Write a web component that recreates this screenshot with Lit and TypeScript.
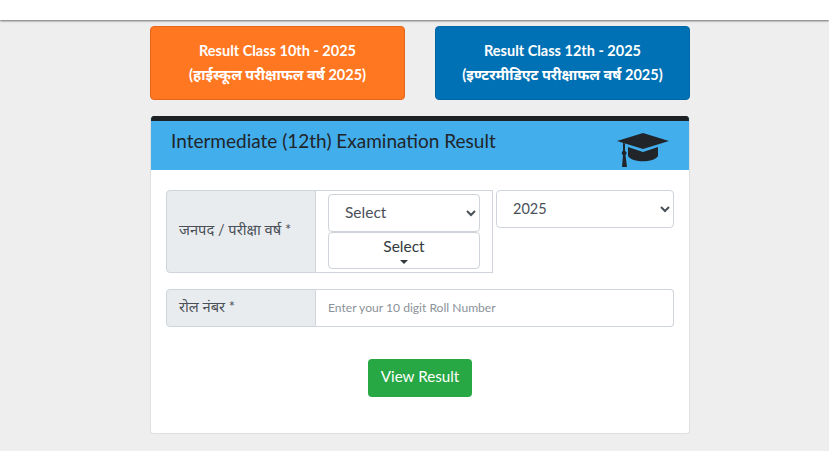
import { LitElement, html, css } from "lit";
import { customElement } from "lit/decorators.js";

@customElement("app-root")
export class AppRoot extends LitElement {
  static styles = css`
    :host { display: block; height: 451px; background: #eeeeee; overflow: hidden;
      font-family: Lato, "Noto Sans Devanagari", "Noto Sans", sans-serif; color: #343a40; }
    * { box-sizing: border-box; }
    .top { height: 20px; background: #fff; box-shadow: 0 1px 2px rgba(0,0,0,.55); }
    .wrap { width: 540px; margin-left: 150px; padding-top: 6px; }
    .links { display: flex; justify-content: space-between; }
    .link { width: 255px; height: 74px; border-radius: 4px; color: #fff; font-weight: 700; font-size: 14.5px;
      line-height: 24px; padding-bottom: 1px; display: flex; flex-direction: column; align-items: center; justify-content: center; text-decoration: none; }
    .orange { background: #ff7721; border: 1px solid #e8661a; }
    .blue { background: #0071b4; border: 1px solid #0068a6; }
    .card { margin-top: 16px; height: 318px; background: #fff; border: 1px solid #dfdfdf; border-top: 0; border-radius: 4px; overflow: hidden; }
    .head { height: 54px; background: #43aeec; border-top: 5px solid #1d2124; margin: 0 -1px 0 0; padding: 7px 20px 0;
      display: flex; justify-content: space-between; }
    .head h2 { margin: 0; font-size: 19px; line-height: 26px; font-weight: 400; color: #212529; }
    .head svg { width: 52px; height: 35px; margin: 4px 1px 0 0; }
    .body { padding: 20px 15px 0; }
    .row1 { display: flex; align-items: flex-start; gap: 3px; }
    .group { display: flex; }
    .label { width: 150px; background: #e9ecef; border: 1px solid #ced4da; border-radius: 4px 0 0 4px; padding: 0 12px 2px;
      font-size: 14.7px; color: #495057; display: flex; align-items: center; }
    .picks { width: 177px; height: 83px; border: 1px solid #ced4da; border-left: 0; padding: 3px 12px 0; display: flex; flex-direction: column; }
    select { height: 38px; width: 100%; background: #fff; border: 1px solid #ced4da; border-radius: 4px; font: inherit; font-size: 15.5px; color: #495057; padding: 0 12px 2px; }
    .sel2 { height: 37px; border: 1px solid #ced4da; border-radius: 4px; background: #fff; display: flex; flex-direction: column; align-items: center;
      font-size: 15.5px; line-height: 26px; color: #343a40; }
    .caret { width: 0; height: 0; border: 4px solid transparent; border-top-color: #343a40; border-bottom: 0; margin-top: 1px; }
    select.year { width: 178px; font-size: 14.5px; }
    .row2 { display: flex; margin-top: 16px; width: 508px; height: 38px; }
    .row2 .label { height: 38px; padding-bottom: 2px; }
    input { flex: 1; border: 1px solid #ced4da; border-left: 0; border-radius: 0 4px 4px 0; padding: 0 12px 1px; font: inherit; font-size: 12.1px; outline: none; }
    input::placeholder { color: #8b9299; }
    .go { display: block; margin: 32px auto 0; width: 104px; height: 38px; border: 0; padding: 0 0 4px; background: #28a745; color: #fff; border-radius: 4px; font: inherit; font-size: 15.2px; }
  `;
  render() {
    return html`
      <div class="top"></div>
      <div class="wrap">
        <div class="links">
          <a class="link orange"><span>Result Class 10th - 2025</span><span>(हाईस्कूल परीक्षाफल वर्ष 2025)</span></a>
          <a class="link blue"><span>Result Class 12th - 2025</span><span>(इण्टरमीडिएट परीक्षाफल वर्ष 2025)</span></a>
        </div>
        <div class="card">
          <div class="head">
            <h2>Intermediate (12th) Examination Result</h2>
            <svg viewBox="0 0 52 35" fill="#212529">
              <path d="M26 1 L52 9 L26 17 L0 9 Z"/>
              <path d="M11 15 L26 20 L41 15 V24 C37 31 15 31 11 24 Z"/>
              <path d="M6 11 L8 11.5 V19 A2.2 2.2 0 0 1 8.5 23 L10 35 H5 L6 23 A2.2 2.2 0 0 1 6 19 Z"/>
            </svg>
          </div>
          <div class="body">
            <div class="row1">
              <div class="group">
                <div class="label">जनपद / परीक्षा वर्ष *</div>
                <div class="picks">
                  <select><option>Select</option></select>
                  <div class="sel2"><span>Select</span><i class="caret"></i></div>
                </div>
              </div>
              <select class="year"><option>2025</option></select>
            </div>
            <div class="row2">
              <div class="label">रोल नंबर *</div>
              <input placeholder="Enter your 10 digit Roll Number" />
            </div>
            <button class="go">View Result</button>
          </div>
        </div>
      </div>
    `;
  }
}
